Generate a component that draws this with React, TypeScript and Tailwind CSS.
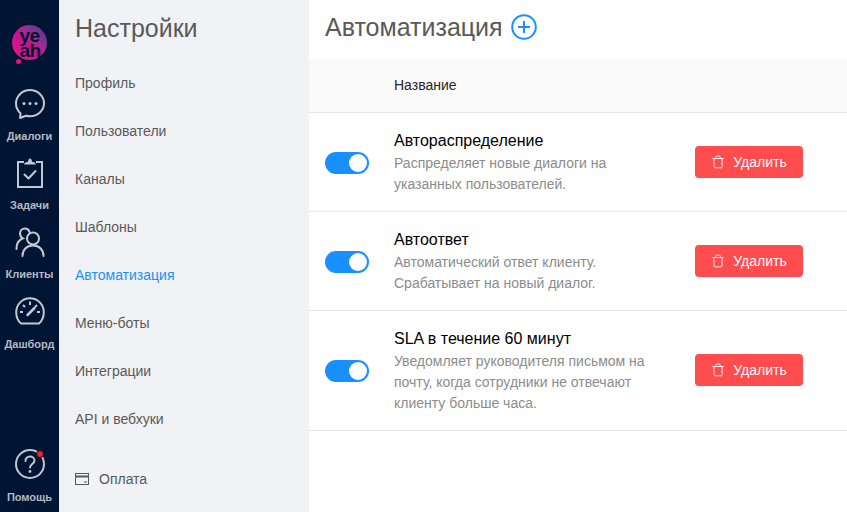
import { Trash } from "lucide-react";

function DialogIcon() {
  return (
    <svg width="32" height="32" viewBox="0 0 32 32" fill="none" stroke="#c3c8d0" strokeWidth="2">
      <path d="M16 2C8.3 2 2 8 2 15.5c0 4 1.8 7.4 4.6 9.9L6 30l6-2.3c1.3.3 2.6.5 4 .5 7.7 0 14-5.8 14-12.9C30 8 23.7 2 16 2Z" strokeLinejoin="round" />
      <circle cx="10" cy="15.5" r="1.5" fill="#c3c8d0" stroke="none" />
      <circle cx="16" cy="15.5" r="1.5" fill="#c3c8d0" stroke="none" />
      <circle cx="22" cy="15.5" r="1.5" fill="#c3c8d0" stroke="none" />
    </svg>
  );
}

function TaskIcon() {
  return (
    <svg width="28" height="30" viewBox="0 0 28 30" fill="none" stroke="#c3c8d0" strokeWidth="2">
      <path d="M8 4H2v25h24V4h-6" />
      <path d="M8 6.500c0-1.800 2.500-2.500 4-2.800C12 2 13 .5 14 .5s2 1.500 2 3.200c1.500.3 4 1 4 2.800Z" fill="#c3c8d0" stroke="none" />
      <path d="m8.500 16.500 4 4 7-7.500" strokeLinecap="round" strokeLinejoin="round" />
    </svg>
  );
}

function ClientsIcon() {
  return (
    <svg width="30" height="30" viewBox="0 0 30 30" fill="none" stroke="#c3c8d0" strokeWidth="2">
      <circle cx="18" cy="11.500" r="6" />
      <path d="M7.500 29c0-6 4-10.500 10.500-10.500S28.500 23 28.500 29" strokeLinecap="round" />
      <path d="M14.500 5C13.800 2.700 12 1.500 10 1.500c-3 0-5 2.300-5 5 0 2 1 3.800 3 4.800C3.500 13 1.500 17 1.500 22" strokeLinecap="round" />
    </svg>
  );
}

function GaugeIcon() {
  return (
    <svg className="mb-[2px]" width="30" height="28" viewBox="0 0 30 28" fill="none" stroke="#c3c8d0" strokeWidth="2">
      <path d="M6 26.500C3 24 1.200 20.300 1.200 15 1.200 7.500 7.300 1.300 15 1.300S28.800 7.500 28.800 15c0 5.300-1.800 9-4.800 11.500Z" strokeLinejoin="round" />
      <path d="M15 4.500v3.500M5 15h3M22 15h3M8 8l2 2M22 8l-2 2" />
      <path d="m12.500 18 7-7" strokeWidth="2.500" strokeLinecap="round" />
    </svg>
  );
}

function HelpIcon() {
  return (
    <div className="relative h-[30px] w-[30px]">
      <svg width="30" height="30" viewBox="0 0 30 30" fill="none" stroke="#c3c8d0" strokeWidth="2">
        <circle cx="15" cy="15" r="14" />
        <path d="M10.500 12c0-2.700 2-4.500 4.500-4.500s4.500 1.700 4.500 4c0 3.500-4.500 3.500-4.500 7" strokeLinecap="round" />
        <circle cx="15" cy="22.500" r="1.400" fill="#c3c8d0" stroke="none" />
      </svg>
      <span className="absolute right-[1px] top-[1px] h-[8px] w-[8px] rounded-full border border-[#001533] bg-[#f5222d]" />
    </div>
  );
}

function RailItem({ icon, label, h }: { icon: React.ReactNode; label: string; h: string }) {
  return (
    <div className={`flex flex-col items-center ${h}`}>
      <div className="flex h-[42px] w-full items-center justify-center">{icon}</div>
      <span className="mt-[4px] text-[11px] font-bold leading-[14px] text-[#b4bac4]">{label}</span>
    </div>
  );
}

const menu = ["Профиль", "Пользователи", "Каналы", "Шаблоны", "Автоматизация", "Меню-боты", "Интеграции", "API и вебхуки"];

const rules = [
  { title: "Автораспределение", text: ["Распределяет новые диалоги на", "указанных пользователей."], h: "h-[99px]", pt: "pt-[2px]" },
  { title: "Автоответ", text: ["Автоматический ответ клиенту.", "Срабатывает на новый диалог."], h: "h-[99px]", pt: "pt-[2px]" },
  {
    title: "SLA в течение 60 минут",
    text: ["Уведомляет руководителя письмом на", "почту, когда сотрудники не отвечают", "клиенту больше часа."],
    h: "h-[120px] pb-[1px]",
    pt: "pt-[3px]",
  },
];

export default function App() {
  return (
    <div className="flex h-[512px] w-[847px] overflow-hidden bg-white font-['Liberation_Sans',Arial,sans-serif]">
      <aside className="flex w-[59px] flex-col items-stretch bg-[#001533]">
        <div className="flex h-[83px] items-start justify-center pt-[25px]">
          <div className="relative h-[35px] w-[35px]">
            <div className="flex h-[35px] w-[35px] items-center justify-center rounded-full bg-gradient-to-tr from-[#f0108a] via-[#c0148f] to-[#33308f] text-center text-[19px] font-bold leading-[15px] tracking-[-0.5px] text-[#001533]">
              <span className="w-[20px]">ye ah</span>
            </div>
            <span className="absolute bottom-[-4px] left-[4px] h-[5px] w-[5px] rounded-full bg-[#ec0f8c]" />
          </div>
        </div>
        <RailItem icon={<DialogIcon />} label="Диалоги" h="h-[69px]" />
        <RailItem icon={<TaskIcon />} label="Задачи" h="h-[69px]" />
        <RailItem icon={<ClientsIcon />} label="Клиенты" h="h-[70px]" />
        <RailItem icon={<GaugeIcon />} label="Дашборд" h="h-[70px]" />
        <div className="mt-auto flex flex-col items-center pb-[8px]">
          <HelpIcon />
          <span className="mt-[11px] text-[11px] font-bold leading-[14px] text-[#b4bac4]">Помощь</span>
        </div>
      </aside>

      <nav className="flex w-[250px] flex-col bg-[#f0f2f5] pl-4">
        <h2 className="mt-[14px] text-[25px] leading-[28px] text-[#595959]">Настройки</h2>
        <ul className="mt-[17px]">
          {menu.map((m) => (
            <li key={m} className={`flex h-12 items-center text-sm ${m === "Автоматизация" ? "text-[#1890ff]" : "text-[#595959]"}`}>
              {m}
            </li>
          ))}
        </ul>
        <div className="mt-auto flex items-center gap-[10px] pb-[25px] text-sm leading-4 text-[#595959]">
          <svg width="14" height="12" viewBox="0 0 14 12" fill="none" stroke="#595959">
            <rect x="0.500" y="0.500" width="13" height="11" />
            <path d="M0 3.500h14" strokeWidth="2" />
            <path d="M9 9h3" />
          </svg>
          Оплата
        </div>
      </nav>

      <main className="flex-1">
        <div className="flex h-[59px] items-center pb-[5px] pl-4">
          <h1 className="text-[25px] leading-[30px] text-[#595959]">Автоматизация</h1>
          <svg className="ml-[8px]" width="26" height="26" viewBox="0 0 26 26" fill="none" stroke="#1890ff" strokeWidth="2">
            <circle cx="13" cy="13" r="11.800" />
            <path d="M13 7v12M7 13h12" />
          </svg>
        </div>
        <div className="flex h-[54px] items-center border-b border-[#e8e8e8] bg-[#fafafa] pb-[2px] pl-[85px] text-sm text-[#262626]">
          Название
        </div>
        {rules.map((r) => (
          <div key={r.title} className={`flex items-center border-b border-[#e8e8e8] pl-4 ${r.h}`}>
            <div className="relative mt-[2px] h-[22px] w-11 rounded-full bg-[#1890ff]">
              <span className="absolute right-[2px] top-[2px] h-[18px] w-[18px] rounded-full bg-white" />
            </div>
            <div className={`ml-[25px] w-[301px] ${r.pt}`}>
              <div className="text-base leading-[20px] text-black">{r.title}</div>
              <div className="mt-[2px] text-sm leading-[21px] text-[#8c8c8c]">
                {r.text.map((t) => (
                  <div key={t}>{t}</div>
                ))}
              </div>
            </div>
            <button className="flex h-8 w-[108px] items-center justify-center gap-[8px] rounded bg-[#ff4d4f] text-sm text-white">
              <Trash size={14} strokeWidth={1.5} />
              Удалить
            </button>
          </div>
        ))}
      </main>
    </div>
  );
}
